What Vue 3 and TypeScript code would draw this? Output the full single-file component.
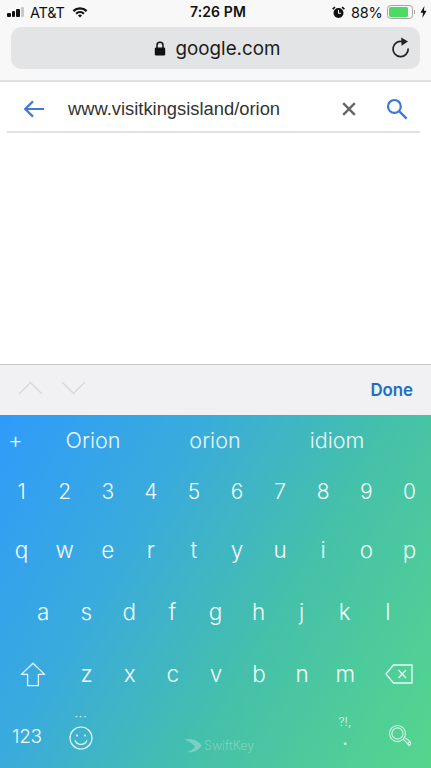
<script setup lang="ts">
const numbers: string[] = ['1','2','3','4','5','6','7','8','9','0']
const top: string[] = ['q','w','e','r','t','y','u','i','o','p']
const mid: string[] = ['a','s','d','f','g','h','j','k','l']
const low: string[] = ['z','x','c','v','b','n','m']
const suggestions: string[] = ['Orion','orion','idiom']
</script>

<template>
  <div class="phone">
    <header class="chrome">
      <div class="status">
        <div class="status-left">
          <span class="signal"><i class="on h1"></i><i class="on h2"></i><i class="on h3"></i><i class="h4"></i></span>
          <span class="carrier">AT&amp;T</span>
          <svg class="wifi" width="16" height="12" viewBox="0 0 16 12">
            <path d="M0.6 4.2A10.6 10.6 0 0 1 15.4 4.2L13.8 5.9A8.3 8.3 0 0 0 2.2 5.9Z" fill="#111"/>
            <path d="M3.3 6.9A6.8 6.8 0 0 1 12.7 6.9L11.1 8.5A4.5 4.5 0 0 0 4.9 8.5Z" fill="#111"/>
            <path d="M6 9.5A2.9 2.9 0 0 1 10 9.5L8 11.6Z" fill="#111"/>
          </svg>
        </div>
        <div class="clock">7:26 PM</div>
        <div class="status-right">
          <svg class="alarm" width="13" height="13" viewBox="0 0 13 13">
            <circle cx="6.5" cy="7" r="5" fill="#111"/>
            <path d="M6.5 4V7.3H9" stroke="#fff" stroke-width="1" fill="none"/>
            <path d="M0.6 3.2L3 1.1M12.4 3.2L10 1.1" stroke="#111" stroke-width="1.6"/>
          </svg>
          <span class="pct">88%</span>
          <span class="battery"><span class="level"></span></span>
          <span class="nub"></span>
          <svg class="bolt" width="7" height="12" viewBox="0 0 7 12">
            <path d="M4.4 0L0.4 6.8H3L2.4 12L6.6 4.8H3.9Z" fill="#111"/>
          </svg>
        </div>
      </div>
      <div class="urlbar">
        <div class="url">
          <svg width="12" height="15" viewBox="0 0 12 15">
            <path d="M3 7V4.3a3 3 0 0 1 6 0V7" stroke="#111" stroke-width="1.5" fill="none"/>
            <rect x="0.8" y="6.4" width="10.4" height="8.2" rx="1.4" fill="#111"/>
          </svg>
          <span>google.com</span>
        </div>
        <svg class="reload" width="20" height="22" viewBox="0 0 20 22">
          <path d="M11.8 4.7A7.6 7.6 0 1 0 17.2 11.5" stroke="#222" stroke-width="1.7" fill="none"/>
          <path d="M10.2 0.6L17 4.4L10.6 8.8Z" fill="#222"/>
        </svg>
      </div>
    </header>

    <div class="search">
      <svg class="back" width="22" height="18" viewBox="0 0 22 18">
        <path d="M21 9H2.5M10 1.4L2.2 9L10 16.6" stroke="#3f77d6" stroke-width="2.2" fill="none"/>
      </svg>
      <div class="query">www.visitkingsisland/orion</div>
      <svg class="clear" width="14" height="14" viewBox="0 0 14 14">
        <path d="M1.2 1.2L12.8 12.8M12.8 1.2L1.2 12.8" stroke="#666" stroke-width="2.4"/>
      </svg>
      <svg class="find" width="22" height="22" viewBox="0 0 22 22">
        <circle cx="8.4" cy="8.4" r="6.4" stroke="#3f77d6" stroke-width="2.2" fill="none"/>
        <path d="M13 13L20.6 20.6" stroke="#3f77d6" stroke-width="2.4"/>
      </svg>
    </div>

    <main class="blank"></main>

    <div class="toolbar">
      <div class="arrows">
        <svg width="25" height="14" viewBox="0 0 25 14"><path d="M1 13L12.5 1.5L24 13" stroke="#d8d8da" stroke-width="1.4" fill="none"/></svg>
        <svg width="25" height="14" viewBox="0 0 25 14"><path d="M1 1L12.5 12.5L24 1" stroke="#d8d8da" stroke-width="1.4" fill="none"/></svg>
      </div>
      <span class="done">Done</span>
    </div>

    <section class="keyboard">
      <div class="suggest">
        <span class="plus">+</span>
        <span v-for="s in suggestions" :key="s" class="word">{{ s }}</span>
      </div>
      <div class="row numbers">
        <span v-for="k in numbers" :key="k" class="key">{{ k }}</span>
      </div>
      <div class="row letters r-top">
        <span v-for="k in top" :key="k" class="key">{{ k }}</span>
      </div>
      <div class="row letters r-mid">
        <span v-for="k in mid" :key="k" class="key">{{ k }}</span>
      </div>
      <div class="row letters r-low">
        <span class="side">
          <svg width="26" height="25" viewBox="0 0 26 25">
            <path d="M13 1.2L24.6 12.4H18.4V23.6H7.6V12.4H1.4Z" stroke="#e8fafa" stroke-width="1.3" stroke-linejoin="round" fill="none"/>
          </svg>
        </span>
        <span v-for="k in low" :key="k" class="key">{{ k }}</span>
        <span class="side">
          <svg width="28" height="20" viewBox="0 0 28 20">
            <path d="M8.5 1H27V19H8.5L1 10Z" stroke="#e8fafa" stroke-width="1.3" stroke-linejoin="round" fill="none"/>
            <path d="M13.5 6L21 14M21 6L13.5 14" stroke="#e8fafa" stroke-width="1.2"/>
          </svg>
        </span>
      </div>
      <div class="bottom">
        <span class="num-key">123</span>
        <span class="emoji">
          <span class="dots">···</span>
          <svg width="24" height="24" viewBox="0 0 24 24">
            <circle cx="12" cy="12" r="11" stroke="#e8fafa" stroke-width="1.2" fill="none"/>
            <circle cx="8" cy="9.5" r="1.1" fill="#e8fafa"/>
            <circle cx="16" cy="9.5" r="1.1" fill="#e8fafa"/>
            <path d="M6 14.2A6.4 6.4 0 0 0 18 14.2" stroke="#e8fafa" stroke-width="1.2" fill="none"/>
          </svg>
        </span>
        <span class="brand">
          <svg width="18" height="15" viewBox="0 0 18 15">
            <path d="M0.5 1.5C6 0 14 1.5 17.5 7.5C14 13.5 8 14.8 3 14C7 13 10 11 11 8.5C8 5 4 3 0.5 1.5Z" fill="#ffffff" fill-opacity="0.28"/>
          </svg>
          <span>SwiftKey</span>
        </span>
        <span class="punct"><span class="p-top">?!,</span><span class="p-dot">.</span></span>
        <svg class="kb-search" width="24" height="24" viewBox="0 0 24 24">
          <circle cx="9.5" cy="9.5" r="8" stroke="#d8f5ea" stroke-width="1.1" fill="none"/>
          <circle cx="9.5" cy="9.5" r="5.6" stroke="#d8f5ea" stroke-width="1.1" fill="none"/>
          <path d="M15.4 15.4L19.6 19.6L22 17.6L17.4 13.8M19.6 19.6L21 21.6L22.6 20L22 17.6" stroke="#d8f5ea" stroke-width="1.1" fill="none"/>
        </svg>
      </div>
    </section>
  </div>
</template>

<style scoped>
.phone {
  width: 431px;
  height: 768px;
  display: flex;
  flex-direction: column;
  overflow: hidden;
  background: #fff;
  font-family: Inter, "Liberation Sans", sans-serif;
  color: #222;
}
.chrome {
  height: 82px;
  box-sizing: border-box;
  background: #f8f8f8;
  border-bottom: 2px solid #dfdfdf;
  flex: none;
}
.status {
  height: 27px;
  position: relative;
  display: flex;
  justify-content: space-between;
  align-items: center;
  padding: 0 4px 3px 7px;
  box-sizing: border-box;
  font-size: 14px;
  color: #111;
}
.status-left, .status-right {
  display: flex;
  align-items: center;
}
.signal {
  display: flex;
  align-items: flex-end;
  gap: 1px;
  height: 10px;
  margin-right: 6px;
}
.signal i {
  width: 3.5px;
  display: block;
  border-radius: 1px;
  background: #c9c9c9;
}
.signal i.on { background: #111; }
.h1 { height: 4px; }
.h2 { height: 6px; }
.h3 { height: 8px; }
.h4 { height: 10px; }
.carrier { font-size: 14.5px; letter-spacing: -0.2px; }
.wifi { margin-left: 7px; }
.clock {
  position: absolute;
  left: 0;
  right: 0;
  top: 3px;
  text-align: center;
  font-size: 14px;
  font-weight: 600;
  letter-spacing: 0.1px;
  padding-left: 5px;
}
.alarm { margin-right: 6px; }
.pct { font-size: 14.5px; margin-right: 4px; letter-spacing: -0.2px; }
.battery {
  width: 26px;
  height: 14px;
  box-sizing: border-box;
  border: 1px solid #a5a5a5;
  border-radius: 3.5px;
  padding: 1px;
  display: block;
}
.level {
  display: block;
  width: 88%;
  height: 100%;
  border-radius: 1.5px;
  background: #4cd964;
}
.nub {
  width: 1.5px;
  height: 4px;
  background: #a5a5a5;
  margin: 0 5px 0 1px;
}
.urlbar {
  margin: 0 11px;
  height: 42px;
  border-radius: 10px;
  background: #e3e4e6;
  display: flex;
  align-items: center;
  justify-content: center;
  position: relative;
}
.url {
  display: flex;
  align-items: center;
  gap: 10px;
  font-size: 18.8px;
  color: #1c1c1c;
  margin-left: 3px;
}
.reload {
  position: absolute;
  right: 9px;
  top: 10px;
}
.search {
  height: 51px;
  margin: 0 11px 0 7px;
  padding-top: 4px;
  box-sizing: border-box;
  border-bottom: 2px solid #e2e2e2;
  display: flex;
  align-items: center;
  flex: none;
}
.back { margin-left: 16px; flex: none; }
.query {
  margin-left: 23px;
  font-family: "Liberation Sans", sans-serif;
  font-size: 18.35px;
  color: #333;
  flex: 1;
  letter-spacing: 0;
}
.clear { margin-right: 30px; flex: none; }
.find { margin-right: 12px; flex: none; }
.blank { flex: 1; background: #fff; }
.toolbar {
  height: 51px;
  flex: none;
  box-sizing: border-box;
  background: #f1f1f3;
  border-top: 1px solid #c8c8c8;
  display: flex;
  justify-content: space-between;
  align-items: center;
  padding: 0 18px;
}
.arrows { display: flex; gap: 18px; margin-top: -4px; }
.done {
  color: #1a6fc9;
  font-size: 16.8px;
  font-weight: 600;
}
.keyboard {
  height: 353px;
  flex: none;
  display: flex;
  flex-direction: column;
  color: #f2fbfb;
  background: linear-gradient(120deg, #2f9bfa 0%, #3aabdc 32%, #45c0aa 62%, #55d68c 100%);
}
.suggest {
  height: 49px;
  display: grid;
  grid-template-columns: 32px 122px 122px 122px;
  align-items: center;
  font-size: 21.6px;
  font-weight: 300;
  color: #e9f7fa;
  flex: none;
}
.plus { text-align: center; font-size: 22px; padding-right: 1px; }
.word { text-align: center; }
.row {
  display: flex;
  justify-content: center;
  align-items: center;
  flex: none;
  font-size: 22.5px;
  font-weight: 300;
}
.numbers { height: 54px; font-size: 21px; }
.r-top { height: 62px; }
.r-mid { height: 62px; }
.r-low { height: 62px; }
.key { width: 43.1px; text-align: center; }
.side {
  width: 64px;
  display: flex;
  justify-content: center;
  padding-top: 2px;
}
.r-low .side:first-child { width: 65px; }
.bottom {
  flex: 1;
  position: relative;
  font-weight: 300;
}
.num-key {
  position: absolute;
  left: 12px;
  top: 21px;
  font-size: 19px;
  letter-spacing: -0.3px;
}
.emoji {
  position: absolute;
  left: 69px;
  top: 22px;
  width: 24px;
  height: 24px;
}
.dots {
  position: absolute;
  top: -15px;
  left: 0;
  right: 0;
  text-align: center;
  font-size: 12px;
  line-height: 12px;
  letter-spacing: 1px;
}
.emoji svg { display: block; }
.brand {
  position: absolute;
  left: 184px;
  top: 34px;
  display: flex;
  align-items: center;
  gap: 2px;
  font-size: 12.5px;
  color: rgba(255, 255, 255, 0.3);
}
.punct {
  position: absolute;
  left: 330px;
  width: 30px;
  top: 11px;
  display: flex;
  flex-direction: column;
  align-items: center;
  font-size: 12px;
  color: #dcf5ec;
}
.p-top { line-height: 14px; }
.p-dot { line-height: 14px; font-size: 16px; font-weight: 600; margin-top: 3px; }
.kb-search {
  position: absolute;
  left: 388px;
  top: 20px;
}
</style>
